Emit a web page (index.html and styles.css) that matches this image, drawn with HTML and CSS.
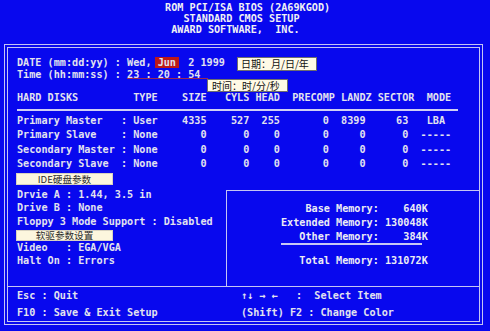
FILE: index.html
```html
<!DOCTYPE html>
<html lang="zh">
<head>
<meta charset="utf-8">
<title>Standard CMOS Setup</title>
<link rel="stylesheet" href="styles.css">
</head>
<body>
<div class="title">
  <div class="t1">ROM PCI/ISA BIOS (2A69KGOD)</div>
  <div class="t2">STANDARD CMOS SETUP</div>
  <div class="t3">AWARD SOFTWARE,  INC.</div>
</div>
<div class="frame">
  <div class="inner">
    <div class="top">
      <div class="row">DATE (mm:dd:yy) : Wed, <span class="hl">Jun</span>  2 1999</div>
      <div class="row">Time (hh:mm:ss) : 23 : 20 : 54</div>
      <div class="disks">
        <div class="dhead">HARD DISKS         TYPE    SIZE   CYLS HEAD  PRECOMP LANDZ SECTOR  MODE</div>
        <div class="sep"></div>
        <div class="drows">
          <div class="ln">Primary Master   : User    4335    527  255       0  8399     63   LBA</div>
          <div class="ln">Primary Slave    : None       0      0    0       0     0      0  -----</div>
          <div class="ln">Secondary Master : None       0      0    0       0     0      0  -----</div>
          <div class="ln">Secondary Slave  : None       0      0    0       0     0      0  -----</div>
        </div>
      </div>
    </div>
    <div class="lower">
      <div class="left">
        <div class="tag tag-ide">IDE硬盘参数</div>
        <div class="lrows">
          <div class="ln">Drvie A : 1.44, 3.5 in</div>
          <div class="ln">Drive B : None</div>
          <div class="ln">Floppy 3 Mode Support : Disabled</div>
        </div>
        <div class="tag tag-fd">软驱参数设置</div>
        <div class="lrows2">
          <div class="ln">Video   : EGA/VGA</div>
          <div class="ln">Halt On : Errors</div>
        </div>
      </div>
      <div class="mem">
        <div class="mline">    Base Memory:    640K</div>
        <div class="mline">Extended Memory: 130048K</div>
        <div class="mline under">   Other Memory:    384K</div>
        <div class="mline total">   Total Memory: 131072K</div>
      </div>
    </div>
    <div class="footer">
      <div class="ln">Esc : Quit</div>
      <div class="ln">↑↓ → ←   :  Select Item</div>
      <div class="ln">F10 : Save &amp; Exit Setup</div>
      <div class="ln">(Shift) F2 : Change Color</div>
    </div>
  </div>
</div>
<div class="uline"></div>
<div class="tip tip-date">日期：月/日/年</div>
<div class="tip tip-time">时间：时/分/秒</div>
</body>
</html>
```
FILE: styles.css
```css
html, body {
  margin: 0;
  padding: 0;
}
body {
  position: relative;
  width: 490px;
  height: 331px;
  overflow: hidden;
  background: #0808ee;
  color: #e2e2ee;
  font-family: "DejaVu Sans Mono", "Liberation Mono", monospace;
  font-weight: bold;
  font-size: 10.17px;
}
.ln, .row, .dhead, .mline, .title > div {
  white-space: pre;
}
.title {
  padding-top: 1.5px;
  line-height: 11px;
  color: #f0f0f4;
}
.t1 { padding-left: 27ch; }
.t2 { padding-left: 30ch; }
.t3 { padding-left: 28ch; }

.frame {
  margin: 9.5px 0 0 4px;
  width: 479px;
  height: 281px;
  box-sizing: border-box;
  border: 1px solid #c4c4f4;
  padding: 2px;
}
.inner {
  height: 100%;
  box-sizing: border-box;
  border: 1px solid #c4c4f4;
  display: flex;
  flex-direction: column;
}
.top {
  padding: 9px 0 0 9px;
}
.row {
  line-height: 12px;
}
.hl {
  background: #bc1818;
  box-shadow: 3px 0 0 #bc1818, -3px 0 0 #bc1818;
}
.disks {
  margin-top: 11px;
}
.dhead {
  line-height: 12px;
}
.sep {
  margin-top: 5px;
  width: 441px;
  height: 2px;
  background: #d0d0f4;
}
.drows {
  margin-top: 2.7px;
  line-height: 14.6px;
}

.lower {
  flex: 1;
  display: flex;
  min-height: 0;
}
.left {
  width: 218px;
  flex: none;
  box-sizing: border-box;
  padding: 0.6px 0 0 9px;
}
.tag {
  margin-left: -1px;
  width: 97px;
  box-sizing: border-box;
  background: #fcf6de;
  border: 1px solid #d8d2c0;
  color: #2a2a2a;
  font-family: "Noto Sans CJK SC", "Noto Sans", sans-serif;
  font-weight: normal;
  font-size: 9.6px;
  text-align: center;
  white-space: nowrap;
}
.tag-ide {
  height: 12px;
  line-height: 10px;
}
.tag-fd {
  margin-top: 0.6px;
  height: 11px;
  line-height: 9px;
}
.lrows {
  margin-top: 3px;
  line-height: 13.8px;
}
.lrows2 {
  line-height: 13.8px;
}
.mem {
  flex: 1;
  margin-top: 17.9px;
  border-top: 1px solid #c4c4f4;
  border-left: 1px solid #c4c4f4;
  padding: 11px 0 0 54px;
  color: #ececf4;
}
.mline {
  line-height: 13.8px;
}
.under {
  width: 141px;
  border-bottom: 2px solid #c8c8f4;
}
.total {
  margin-top: 8.5px;
}
.footer {
  border-top: 1px solid #c4c4f4;
  padding: 1px 0 0 9px;
  display: grid;
  grid-template-columns: 224px auto;
  line-height: 16.5px;
}

.uline {
  position: absolute;
  left: 127px;
  top: 78px;
  width: 81px;
  height: 1px;
  background: #9a2a52;
}
.tip {
  position: absolute;
  box-sizing: border-box;
  background: #fffae6;
  border: 1px solid #6e6e6e;
  color: #111;
  font-family: "Noto Sans CJK SC", "Noto Sans", sans-serif;
  font-weight: normal;
  font-size: 10px;
  white-space: nowrap;
  overflow: hidden;
}
.tip-date {
  left: 237px;
  top: 57px;
  width: 80px;
  height: 14px;
  padding-left: 3px;
  line-height: 12px;
}
.tip-time {
  left: 207px;
  top: 79px;
  width: 81px;
  height: 13px;
  padding-left: 4px;
  line-height: 11px;
}
```
